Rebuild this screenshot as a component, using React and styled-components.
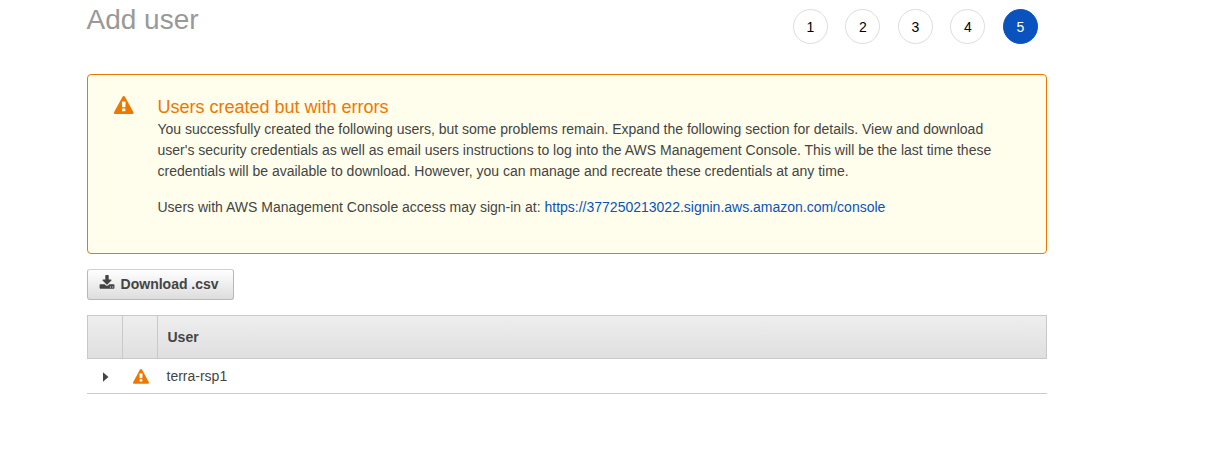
import React from "react";
import styled, { createGlobalStyle } from "styled-components";

const Global = createGlobalStyle`
  *, *::before, *::after { box-sizing: border-box; }
  body { margin: 0; background: #fff; color: #444; overflow: hidden;
    font-family: "Liberation Sans", Arial, sans-serif; font-size: 14px; line-height: 21px; }
`;
const Page = styled.main`
  width: 960px;
  margin-left: 87px;
`;
const Header = styled.header`
  display: flex;
  justify-content: space-between;
  height: 74px;
  padding-right: 9.1px;
`;
const Title = styled.h1`
  margin: 4px 0 0 -0.5px;
  font-size: 28px;
  line-height: 32px;
  font-weight: 400;
  color: #999;
`;
const Steps = styled.ol`
  display: flex;
  gap: 17.5px;
  margin: 9px 0 0;
  padding: 0;
  list-style: none;
`;
const Step = styled.li`
  width: 35px;
  height: 35px;
  padding-top: 7px;
  border: 1px solid ${(p) => (p.$active ? "#0a52bd" : "#ddd")};
  border-radius: 50%;
  background: ${(p) => (p.$active ? "#0a52bd" : "#fff")};
  color: ${(p) => (p.$active ? "#fff" : "#000")};
  text-align: center;
`;
const Alert = styled.section`
  display: flex;
  height: 180px;
  padding: 21px 25px 0 26px;
  border: 1px solid #ee7700;
  border-radius: 4px;
  background: #fffeec;
`;
const AlertIcon = styled.div`
  width: 43.5px;
  flex: none;
  padding-left: 0.3px;
`;
const Icon = styled.svg`
  display: block;
  flex: none;
  width: ${(p) => p.$size}px;
  height: ${(p) => p.$size}px;
  fill: ${(p) => p.$color};
`;
const AlertTitle = styled.h2`
  margin: 0;
  font-size: 18px;
  line-height: 23px;
  font-weight: 400;
  color: #ee7700;
`;
const Text = styled.p`
  margin: 0 0 15px;
  width: 850px;
`;
const Link = styled.a`
  color: #0a52bd;
  text-decoration: none;
`;
const Button = styled.button`
  display: flex;
  align-items: flex-start;
  gap: 5.6px;
  width: 147px;
  height: 31px;
  margin: 15px 0;
  padding: 5px 0 0 11px;
  border: 1px solid #b8b8b8;
  border-top-color: #d0d0d0;
  border-radius: 3px;
  background: linear-gradient(#fff, #ddd);
  color: #444;
  font: bold 14px/19px "Liberation Sans", Arial, sans-serif;
`;
const Table = styled.div`
  border-bottom: 1px solid #ccc;
`;
const HeadRow = styled.div`
  display: grid;
  grid-template-columns: 35px 35px 1fr;
  height: 44px;
  border: 1px solid #c9c9c9;
  background: linear-gradient(#eee, #dfdfdf);
  font-weight: bold;
`;
const HeadCell = styled.div`
  display: flex;
  align-items: center;
  padding-left: 9.5px;
  border-right: 1px solid #c9c9c9;
  &:last-child { border-right: 0; }
`;
const Row = styled.div`
  display: grid;
  grid-template-columns: 36px 35px 1fr;
  height: 34px;
`;
const Cell = styled.div`
  padding: ${(p) => p.$pad};
`;

const Warning = ({ size }) => (
  <Icon $size={size} $color="#ee7700" viewBox="0 0 1792 1792" aria-hidden="true">
    <path d="M1050 1375v-190q0-33-32-33h-244q-32 0-32 33v190q0 33 32 33h244q32 0 32-33zm-4-374l22-459q0-30-34-30h-276q-34 0-34 32l22 457q0 23 34 23h232q33 0 34-23zm-38-934l768 1408q35 63-2 126-17 29-46.5 46t-63.5 17h-1536q-34 0-63.5-17t-46.5-46q-37-63-2-126l768-1408q17-31 47-49t65-18 65 18 47 49z" fillRule="evenodd" />
  </Icon>
);
const Download = () => (
  <Icon $size={16} $color="#444" viewBox="0 0 1792 1792" aria-hidden="true">
    <path d="M1344 1344q0-26-19-45t-45-19-45 19-19 45 19 45 45 19 45-19 19-45zm256 0q0-26-19-45t-45-19-45 19-19 45 19 45 45 19 45-19 19-45zm128-224v320q0 40-28 68t-68 28h-1472q-40 0-68-28t-28-68v-320q0-40 28-68t68-28h465l135 136q58 56 136 56t136-56l136-136h464q40 0 68 28t28 68zm-325-569q17 41-14 70l-448 448q-18 19-45 19t-45-19l-448-448q-31-29-14-70 17-39 59-39h256v-448q0-26 19-45t45-19h256q26 0 45 19t19 45v448h256q42 0 59 39z" />
  </Icon>
);

export default function App() {
  return (
    <>
      <Global />
      <Page>
        <Header>
          <Title>Add user</Title>
          <Steps>
            {[1, 2, 3, 4, 5].map((n) => <Step key={n} $active={n === 5}>{n}</Step>)}
          </Steps>
        </Header>
        <Alert>
          <AlertIcon><Warning size={19.5} /></AlertIcon>
          <div>
            <AlertTitle>Users created but with errors</AlertTitle>
            <Text>
              You successfully created the following users, but some problems remain. Expand the following section for details. View and download user's security credentials as well as email users instructions to log into the AWS Management Console. This will be the last time these credentials will be available to download. However, you can manage and recreate these credentials at any time.
            </Text>
            <Text>
              Users with AWS Management Console access may sign-in at: <Link href="#">https://377250213022.signin.aws.amazon.com/console</Link>
            </Text>
          </div>
        </Alert>
        <Button><Download />Download .csv</Button>
        <Table>
          <HeadRow><HeadCell /><HeadCell /><HeadCell>User</HeadCell></HeadRow>
          <Row>
            <Cell $pad="13px 0 0 16px">
              <Icon $size={10} $color="#444" viewBox="0 0 10 10" aria-hidden="true">
                <path d="M0 0.2L5.5 5L0 9.8Z" />
              </Icon>
            </Cell>
            <Cell $pad="10px 0 0 10px"><Warning size={16} /></Cell>
            <Cell $pad="7px 0 0 8.5px">terra-rsp1</Cell>
          </Row>
        </Table>
      </Page>
    </>
  );
}
